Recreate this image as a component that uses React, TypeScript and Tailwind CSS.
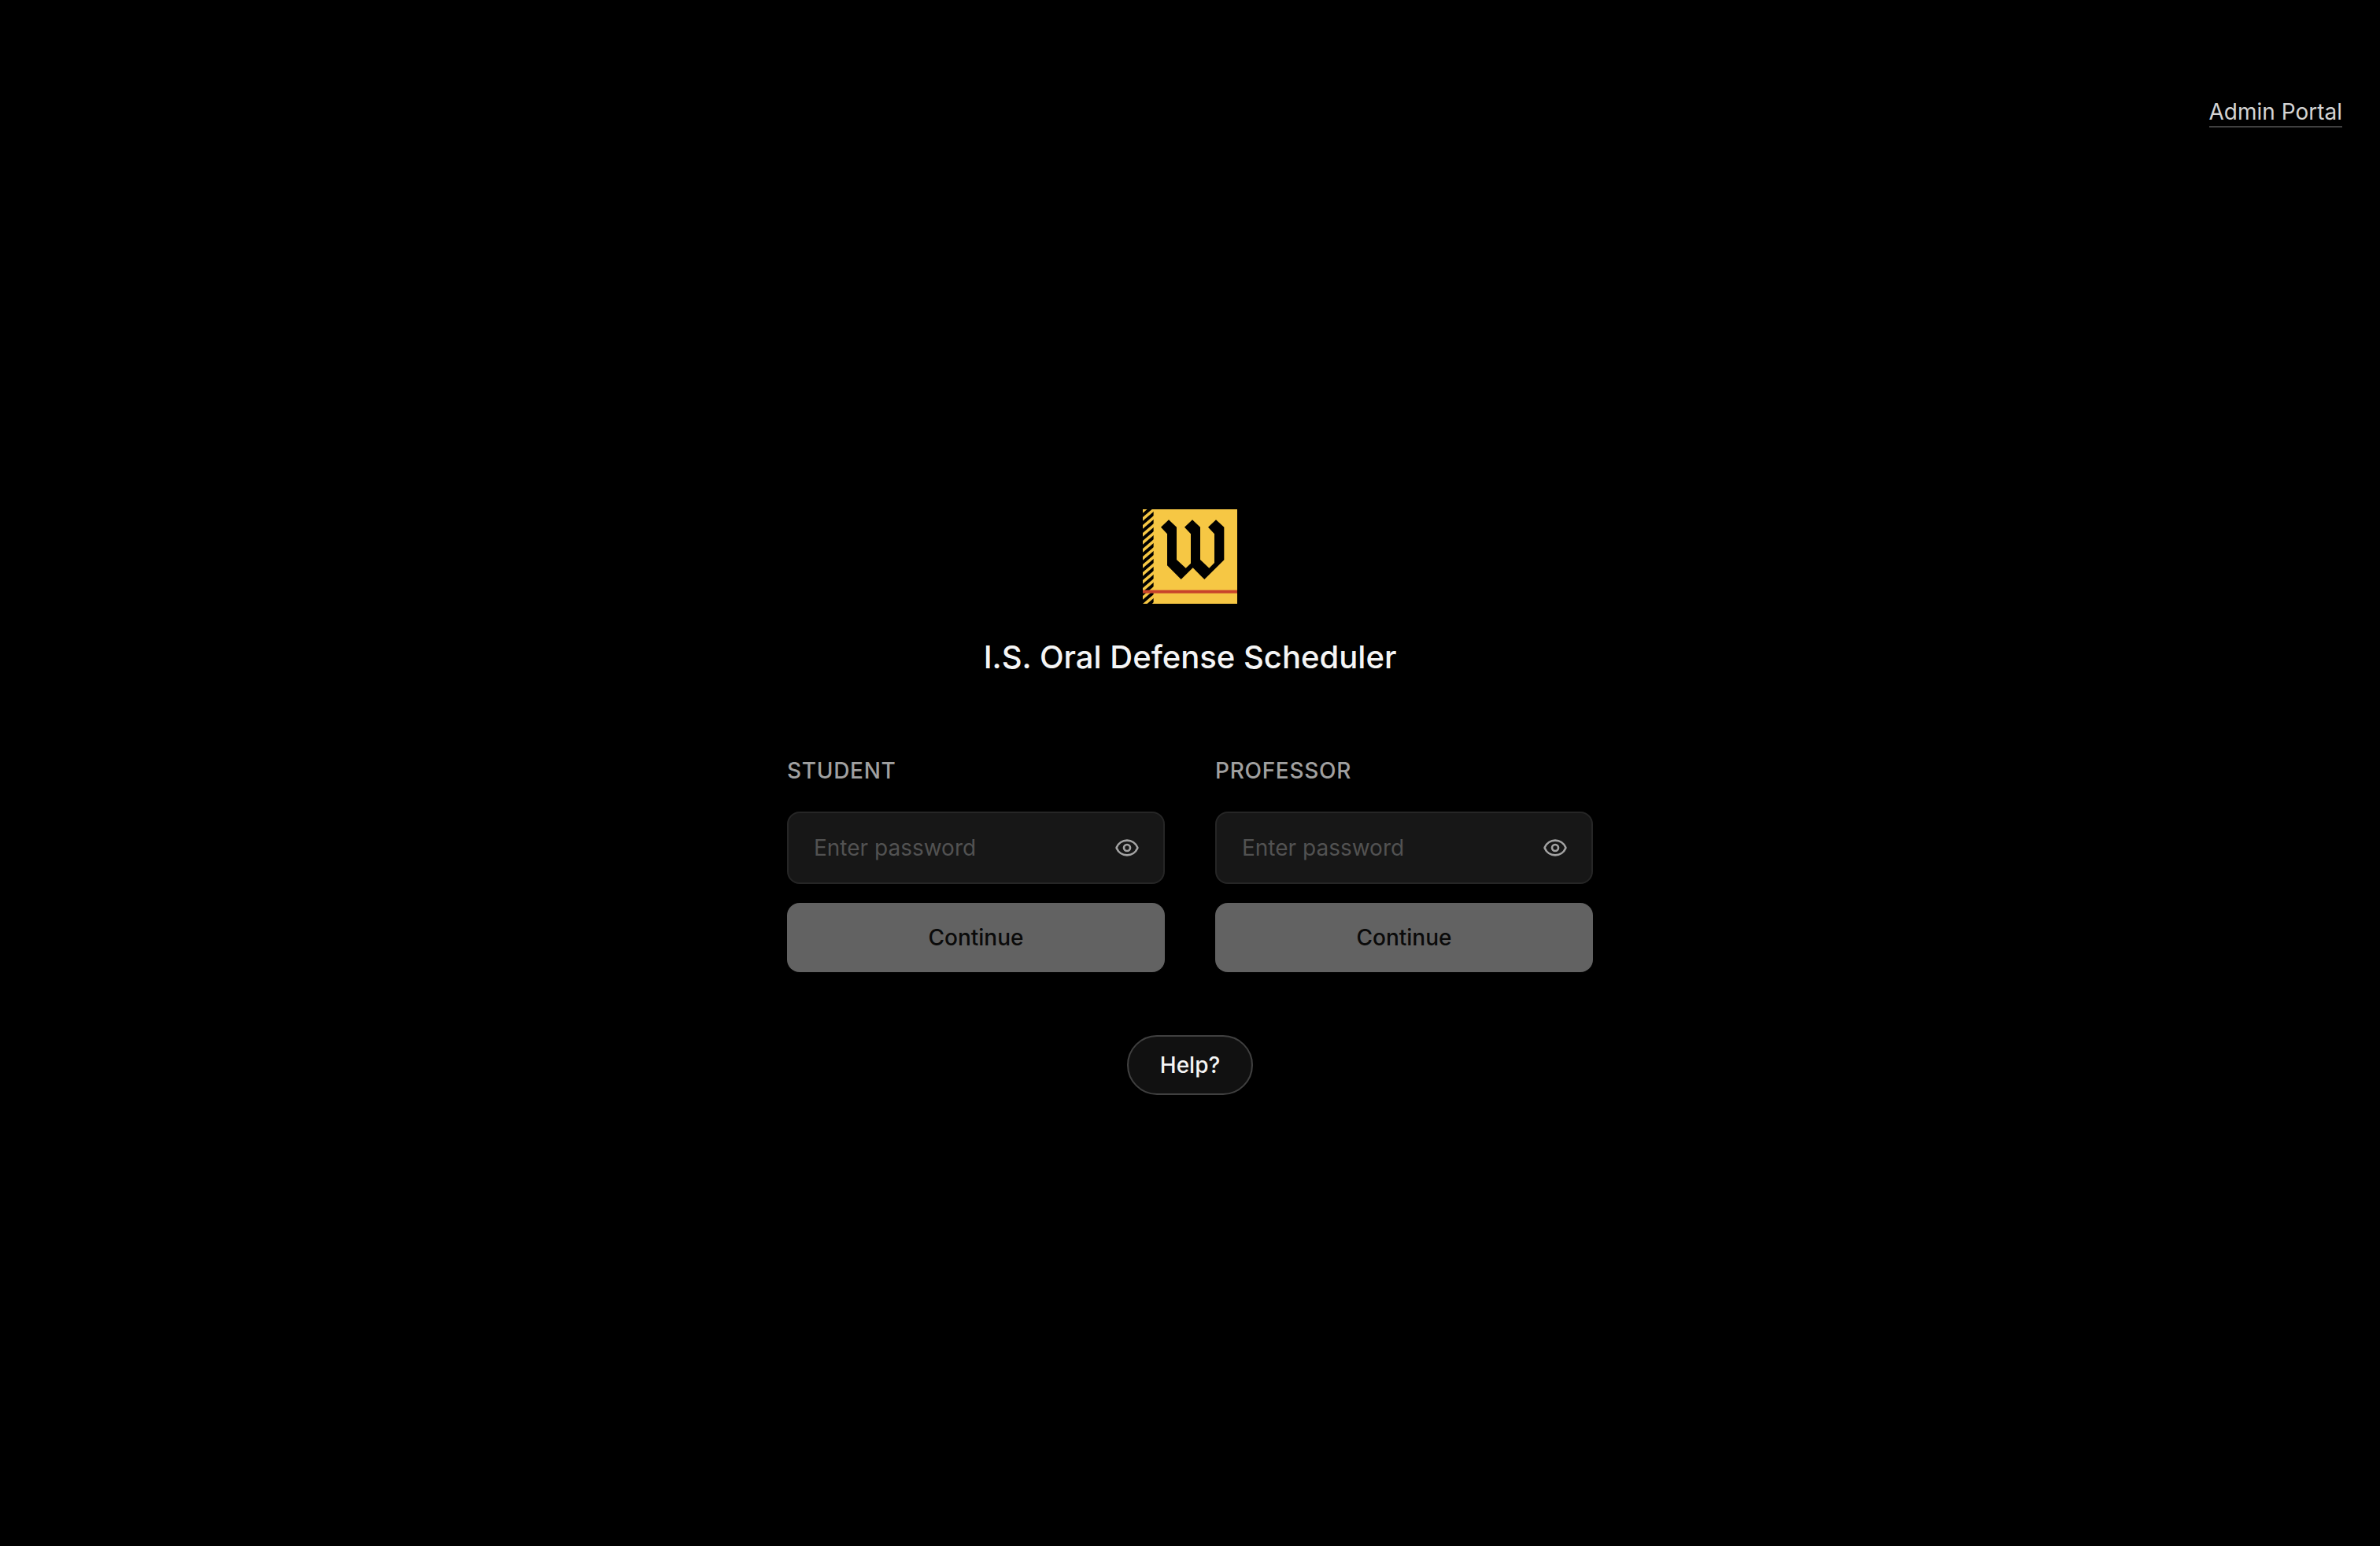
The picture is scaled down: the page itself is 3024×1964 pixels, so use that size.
import { useId, useState } from "react";
import { Eye, EyeOff } from "lucide-react";

const stripes = Array.from({ length: 14 }, (_, i) => 22 + i * 30);

function Logo() {
  return (
    <svg viewBox="0 0 360 360" className="size-[120px]" role="img" aria-label="College of Wooster">
      <rect width="360" height="360" fill="#f6c744" />
      <clipPath id="stripe-edge">
        <rect width="41" height="360" />
      </clipPath>
      <g clipPath="url(#stripe-edge)" stroke="#000" strokeWidth="12">
        {stripes.map((y) => (
          <line key={y} x1="-20" y1={y + 17} x2="60" y2={y - 51} />
        ))}
      </g>
      <rect y="308" width="360" height="12" fill="#c8442b" />
      <path
        fill="#000"
        d="M69 68 99 40 129 68V192L164 224 183 206V94L159 68 189 40 219 68V192L253 224 273 204V94L249 68 279 40 310 68V193L235 267 191 223 146 267 93 214V94Z"
      />
    </svg>
  );
}

function PasswordForm({ role }: { role: string }) {
  const id = useId();
  const [value, setValue] = useState("");
  const [visible, setVisible] = useState(false);
  const Icon = visible ? EyeOff : Eye;
  return (
    <form className="flex flex-1 flex-col" onSubmit={(e) => e.preventDefault()}>
      <label htmlFor={id} className="mb-8 font-medium tracking-wide text-[#a0a0a0] uppercase">
        {role}
      </label>
      <div className="relative mb-6">
        <input
          id={id}
          type={visible ? "text" : "password"}
          value={value}
          onChange={(e) => setValue(e.target.value)}
          placeholder="Enter password"
          className="h-[92px] w-full rounded-2xl border-2 border-[#262626] bg-[#171717] pr-20 pl-8 text-white outline-none placeholder:text-[#525252]"
        />
        <button
          type="button"
          aria-label="Toggle password visibility"
          onClick={() => setVisible(!visible)}
          className="absolute inset-y-0 right-8 flex items-center text-[#a3a3a3]"
        >
          <Icon className="size-8" />
        </button>
      </div>
      <button type="submit" className="h-[88px] rounded-2xl bg-[#626262] font-medium text-[#0a0a0a]">
        Continue
      </button>
    </form>
  );
}

export default function App() {
  return (
    <div className="flex min-h-screen flex-col bg-black font-['Inter',sans-serif] text-[28px] leading-10 text-white">
      <header className="flex justify-end px-12 pt-[124px]">
        <a href="#admin" className="border-b-2 border-[#404040] leading-9 text-[#d4d4d4]">
          Admin Portal
        </a>
      </header>
      <main className="flex flex-1 flex-col items-center justify-center pb-[88px]">
        <Logo />
        <h1 className="mt-10 mb-24 text-[40px] leading-14 font-medium text-[#f5f5f5]">
          I.S. Oral Defense Scheduler
        </h1>
        <div className="mb-20 flex w-full max-w-[1024px] gap-16">
          <PasswordForm role="Student" />
          <PasswordForm role="Professor" />
        </div>
        <button type="button" className="h-[76px] rounded-full border-2 border-[#404040] bg-[#111111] px-10 font-medium text-[#f5f5f5]">
          Help?
        </button>
      </main>
    </div>
  );
}
